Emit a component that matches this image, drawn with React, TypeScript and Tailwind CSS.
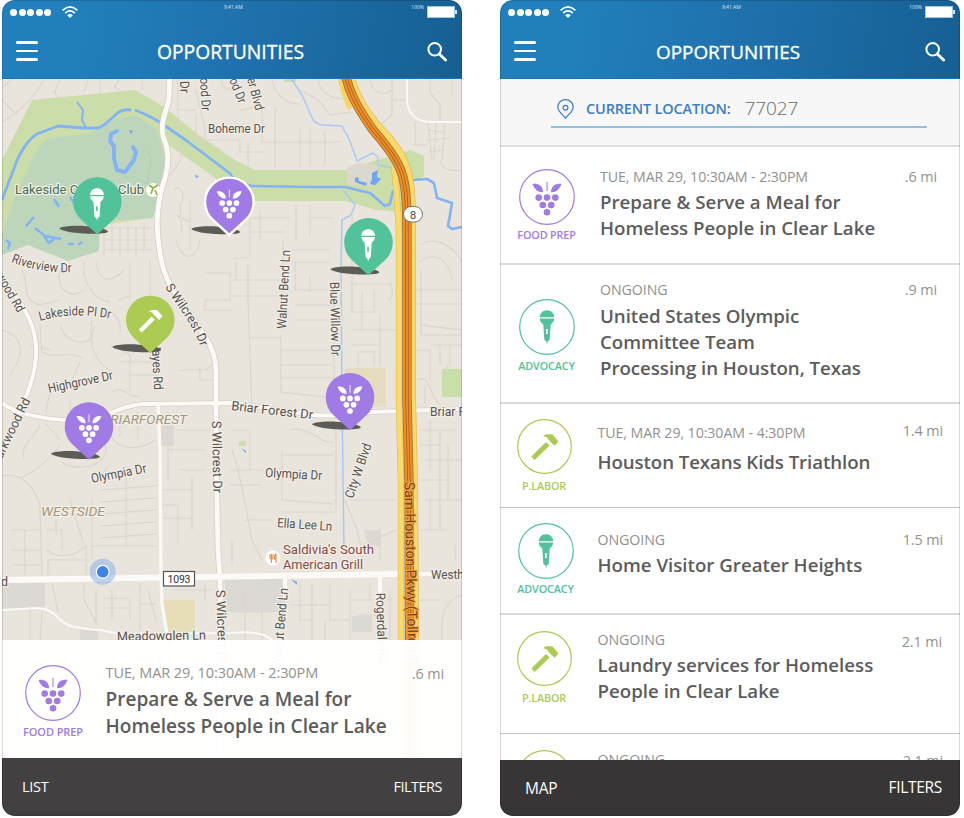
import React from "react";

type Kind = "food" | "mic" | "hammer";

const COLORS: Record<Kind, string> = { food: "#a07be5", mic: "#52c29b", hammer: "#abcb52" };

function Glyph({ kind, hole }: { kind: Kind; hole: string }) {
  if (kind === "food")
    return (
      <g>
        <path d="M-14.5 -13 C-10 -14 -4 -12 -4 -4.8 C-9 -4.5 -12 -7 -14.5 -13Z" />
        <path d="M14.5 -13 C10 -14 4 -12 4 -4.8 C9 -4.5 12 -7 14.5 -13Z" />
        <rect x="-0.5" y="-15" width="1" height="9" />
        <circle cx="-8.3" cy="0.6" r="3.3" />
        <circle cx="0" cy="0.6" r="3.3" />
        <circle cx="8.3" cy="0.6" r="3.3" />
        <circle cx="-4.2" cy="8" r="3.3" />
        <circle cx="4.2" cy="8" r="3.3" />
        <circle cx="0" cy="15.2" r="3.3" />
      </g>
    );
  if (kind === "mic")
    return (
      <g>
        <path d="M-7.2 -9.8 C-7.2 -14 -4 -16.8 0 -16.8 S7.2 -14 7.2 -9.8Z" />
        <path d="M-7.2 -8.4 H7.2 C7 -5.7 5.6 -3.8 3.7 -2.6 L2.7 12.8 L0.7 14.6 L0 17.4 L-0.7 14.6 L-2.7 12.8 L-3.7 -2.6 C-5.6 -3.8 -7 -5.7 -7.2 -8.4Z" />
        <rect x="-1" y="2" width="1.7" height="5" rx="0.6" fill={hole} />
      </g>
    );
  return (
    <g>
      <path d="M-13.4 10.3 L1.5 -4.7 L5.2 -0.9 L-10 13.8Z" />
      <path d="M-1.5 -10.4 L1.3 -12.4 H8 L14.2 -5 L10.2 -0.8 L4 -7 L2.4 -9.4Z" />
    </g>
  );
}

function Badge({ kind, size }: { kind: Kind; size: string }) {
  return (
    <svg className={size} viewBox="-28 -28 56 56" fill={COLORS[kind]}>
      <circle r="27.3" fill="#fff" stroke={COLORS[kind]} strokeWidth="1.2" />
      <Glyph kind={kind} hole="#fff" />
    </svg>
  );
}

function Pin({ x, y, kind, outlined }: { x: number; y: number; kind: Kind; outlined?: boolean }) {
  return (
    <g transform={`translate(${x} ${y})`}>
      <path d="M-38 27 C-34 23.6 -16 23.4 0 26 C10 28 13 30 9 31.200 C2 33.200 -32 32.500 -38 27Z" fill="#5c5b55" />
      <path
        d="M0 33 L-16.4 17.9 A24.3 24.3 0 1 1 16.4 17.9Z"
        fill={COLORS[kind]}
        stroke={outlined ? "#fff" : "none"}
        strokeWidth={outlined ? 2.4 : 0}
      />
      <g transform={kind === "mic" ? "translate(-0.3 2.8) scale(.95)" : "translate(0 .6) scale(.86)"} fill="#fff">
        <Glyph kind={kind} hole={COLORS[kind]} />
      </g>
    </g>
  );
}

const MINOR_STREETS = [
  // north-west corner
  "M2 88 L12 79 M2 122 C20 112 34 98 44 79 M14 112 L2 100 M60 79 C58 88 50 92 60 98 M88 79 L84 92 M100 79 V92 M120 79 C118 84 110 86 120 90 M142 79 V90",
  "M178 79 V150 M178 110 H196 M196 90 L205 128 H205 M196 115 V140 H240 V152 M205 128 V150 M221 79 C222 90 232 92 236 84 M240 110 L262 106 M262 106 V142 H300 V128 M275 106 V142 M248 142 V168 M275 142 V168 M300 142 V168",
  "M262 142 H340 M310 128 V165 M325 130 V165 M240 152 H262 M272 79 C275 95 285 104 300 104 M300 90 L318 100 L330 115 L350 112 M318 79 C320 95 335 100 345 98",
  // north-east corner
  "M370 79 C372 92 382 98 392 90 M392 79 V115 L376 128 M392 100 H407 M430 79 V92 L440 105 V122 M415 122 V145 H428 M428 122 L432 160 M436 122 L434 160 M445 122 L442 160 M428 130 L442 132 M427 140 L450 138 M428 152 L444 150 M452 79 V95 M440 160 C440 168 450 172 462 170",
  "M420 245 C430 238 450 240 462 262 M420 262 C432 252 448 256 452 280 M414 290 H462 M414 304 H462 M420 325 L462 330 M421 270 V335 M421 335 H462 M430 345 H462 M440 345 V365 M450 345 V365 M414 350 H430 V380 M418 380 C430 372 430 400 440 404",
  // golf course surrounds
  "M104 228 H152 M104 228 V256 M112 222 V250 M120 228 V256 M128 222 V250 M136 228 V256 M144 222 V250 M104 240 H152 M104 250 H152 M170 175 C178 165 184 158 180 150 M174 190 C182 182 186 200 180 205 L182 232 M176 215 L190 222 M190 200 V250 M176 240 C182 262 196 262 200 240",
  "M250 205 V258 H232 M260 212 V240 M250 218 H290 M250 232 H285 M283 240 V300 M283 250 H330 M296 205 V240 M310 205 V236 M310 218 H334 M283 262 H330 M350 225 H372 M352 215 V300",
  // centre grid
  "M248 265 V300 L252 410 M232 280 H282 M232 296 H282 M236 262 V280 M281 335 V392 M334 290 V390 M281 350 H334 M281 365 H334 M281 378 H334 M281 392 L334 398 M250 338 H281 M310 292 V276 M295 262 V290 M295 290 H334 M295 305 H334 M295 320 H334",
  "M350 284 H392 M352 284 V312 H374 V290 M362 292 V330 H380 V316 M352 330 H396 M352 345 H380 M380 330 V366 M358 366 V352 H374 V366 M388 284 C394 286 394 296 388 300",
  "M205 273 H230 V300 H205 M205 300 V310 H232 M180 370 H206 L212 365 M200 368 V380 H212 M195 340 L212 345",
  // west side
  "M22 270 C30 285 20 300 40 305 L60 300 M60 270 C56 290 70 300 84 290 M84 262 C82 280 92 300 110 302 M96 262 C100 285 112 282 124 270 M40 325 L42 352 C55 360 70 350 82 358 M30 345 L50 350 M60 325 C64 340 78 345 90 340 L92 320 M95 326 C86 345 96 362 112 372 M100 308 C112 310 122 318 120 332 M118 300 L130 296 M130 262 V300 M150 260 V296 M110 345 L130 355 V392 M120 362 H158 M130 375 H158 M112 392 C122 384 130 400 140 396 M50 392 L46 412 M70 400 V420 M80 362 L72 380 M2 330 C20 335 28 350 10 375",
  "M40 425 C34 440 20 442 24 460 M46 424 L60 440 M20 478 C40 470 52 456 60 445 M66 440 C90 430 108 440 106 452 C100 470 70 470 62 462 M2 476 C20 472 34 485 40 505 L42 580 M110 435 C120 452 140 450 156 440 M108 466 L98 480 M120 420 V436 M138 412 V440 M168 412 V450 H206 M175 430 H210 M168 430 V480 M180 470 H206 M192 476 V530 M163 490 H192 M163 505 H178 V545 M163 518 H192",
  "M10 530 H40 M10 550 H40 M25 530 V575 M12 565 H40 M46 530 H62 V550 M46 550 C60 560 78 556 86 545 V575 M56 520 V535 M70 500 L84 545 M92 500 V560 M100 490 L156 486 M100 502 L156 498 M100 514 L156 510 M100 526 L156 522 M100 538 L156 534 M126 478 V546 M92 546 H156 M48 575 V560 H86",
  "M84 583 V600 L96 622 M96 590 V625 M104 598 H130 V620 M104 608 H130 M112 590 V620 M140 583 V630 M148 590 L156 620 M44 600 V583 M52 583 L58 612 M30 610 V640 M42 612 L40 640 M140 604 H156 M172 590 H212 M205 583 V600",
  // south centre
  "M232 450 C240 470 244 500 252 540 L262 560 M230 470 H282 M230 485 H262 M282 450 V500 M282 455 H334 M282 500 L334 504 M282 512 H336 M300 540 V570 M336 430 V510 M290 430 C310 425 320 445 334 442 M232 430 H250 V470 M345 500 C352 520 360 528 362 560 M350 500 H396 M362 545 L396 530 M380 528 V560 M232 540 V566 M244 520 H270",
  "M232 612 H270 M245 590 V640 M262 612 V640 M300 583 V620 M312 583 V640 M290 605 H330 M330 583 V620 H350 M350 590 V640 M350 600 H392 M370 583 V600 M390 590 V640 M300 620 H312 M325 620 V640 M356 615 H380",
  "M430 420 V470 M420 430 H455 M440 430 V530 M420 445 H440 M425 460 H462 M448 445 V500 M420 480 H448 M425 500 H462 M430 500 V530 M420 530 H445 M455 545 V560 M462 595 C445 600 440 615 442 640 M420 600 H440 M425 385 V404 M447 372 V366",
].join(" ");

function MapLabel(props: { x: number; y: number; rotate?: number; width: number; size?: number; fill?: string; children: string }) {
  const { x, y, rotate = 0, width, size = 13, fill = "#55524e" } = props;
  return (
    <text
      transform={`translate(${x} ${y}) rotate(${rotate})`}
      textLength={width}
      lengthAdjust="spacingAndGlyphs"
      fontSize={size}
      fill={fill}
      stroke="#f3efe9"
      strokeWidth="2.5"
      strokeLinejoin="round"
      paintOrder="stroke"
    >
      {props.children}
    </text>
  );
}

function CurvedLabel({ id, d, width, size = 13, children }: { id: string; d: string; width: number; size?: number; children: string }) {
  return (
    <g>
      <path id={id} d={d} fill="none" />
      <text fontSize={size} fill="#55524e" stroke="#f3efe9" strokeWidth="2.5" strokeLinejoin="round" paintOrder="stroke">
        <textPath href={`#${id}`} textLength={width} lengthAdjust="spacingAndGlyphs">
          {children}
        </textPath>
      </text>
    </g>
  );
}

const HIGHWAY = "M345 72 C348 90 356 106 373 130 C390 150 401 164 404 182 C407 196 407 210 407 268 V400 L409 483 L410 760";
const HIGHWAY_EAST = "M350 72 C353 90 361 106 377 125 C398 146 406 160 410 182 C412 196 412 210 412 268 V400 L414 483 L416 760";
const WILCREST = "M170 72 L169 98 C167 112 160 120 163 136 C168 148 170 160 165 178 C158 200 155 220 159 246 C162 272 168 285 187 310 C202 334 216 345 216 372 V450 L218 550 L220 577 V760";
const BRIAR_FOREST = "M2 403 C16 414 50 422 90 420 C110 416 118 406 142 404 L233 403 L313 415 Q340 417 373 412 L462 409";
const KIRKWOOD = "M2 280 C18 296 34 320 36 345 C38 372 26 400 8 436 L2 450";

function CityMap() {
  return (
    <svg className="block h-[679px] w-[460px] font-['Roboto',sans-serif]" viewBox="2 79 460 679">
      <rect x="2" y="79" width="460" height="679" fill="#e9e4dc" />
      <path d="M2 160 L32 100 L135 90 L163 106 L200 136 L235 160 L255 170 H347 L377 160 L403 153 L410 150 L424 156 V176 L414 182 L402 212 L377 210 L345 201 H250 L232 190 L166 143 L164 180 L150 218 L2 240Z" fill="#cbdea9" />
      <path d="M48 138 L90 134 L117 118 L137 116 L157 130 L165 161 L163 181 L153 218 L100 221 L99 251 L68 261 L28 245 L2 255 V235 L14 200 L27 171 L37 150Z" fill="#bcd5bb" />
      <path d="M347 168 L358 163 L377 165 L378 178 L370 186 L347 184Z" fill="#dbd8d0" />
      <path d="M345 368 H386 V407 H345Z" fill="#e6dcbf" />
      <path d="M442 369 H462 V397 H442Z" fill="#c8dfaa" />
      <path d="M163 600 H195 V632 H166Z" fill="#e7ddb8" />
      <path d="M239 441 H246 V446 H239Z" fill="#c8dfaa" />
      <path d="M284 79 H296 V82 H284Z" fill="#c8dfaa" />
      <path d="M2 583 H45 V606 L36 610 H2Z M225 579 H285 V612 H225Z M352 616 H372 V632 H352Z M364 530 H380 V546 H368Z M161 424 H174 V446 H161Z M80 628 H98 V640 H80Z" fill="#dcd9d4" />
      <path d={MINOR_STREETS} fill="none" stroke="#dad4cb" strokeWidth="1.1" />
      <path d="M148 150 C155 165 145 180 148 190" fill="none" stroke="#b0cab0" strokeWidth="0.8" />

      <g fill="none" stroke="#83b3f6" strokeLinejoin="round">
        <path strokeWidth="2.8" d="M2 200 L18 158 C24 146 30 138 37 134 L58 126 L83 128 H98 C106 126 114 115 119 112 Q124 109 131 110 M135 110 Q146 114 158 121 L187 141 L232 175" />
        <path strokeWidth="2.6" d="M230 175 Q240 184 252 186 L310 187 H345 L370 193 L385 206 L390 204 L393 190 M412 180 L427 179 L434 183 L437 198 L452 203 L448 226 L452 229 L462 227" />
        <path strokeWidth="2" d="M77 102 L83 110 L82 120 L86 128" />
        <path strokeWidth="1.5" stroke="#a8c9f4" d="M292 80 L302 95 L313 120 Q317 124 323 125 L342 126 L350 141 L357 161 L373 153 L378 157 L378 165 L392 168 M343 190 L355 205 L351 215 L342 220 L341 268 L342 400 L344 552" />
        <path strokeWidth="4" strokeLinecap="round" d="M117 131 L111 134 L110 141 L114 146 V158 L117 170 L125 172 L134 160 L136 152 L133 147" />
        <path strokeWidth="2.4" d="M54 199 L59 207 M34 217 L26 226 M35 228 L45 236 L61 239 M44 236 L49 243 L54 239 M68 244 H74 M78 245 L82 242 M6 240 L10 243 L8 249 M70 197 L74 203" />
      </g>
      <path d="M372 173 L378 170 L377 177 L381 179 L375 185 L370 184 L372 179Z M355 178 L358 177 L359 181 L367 183 L366 186 L355 182Z M129 130 l4 1 -2 3Z M195 175 l4 1 -3 2Z M241 448 l5 3 v2Z M291 579 l6 3 0 3Z" fill="#6fa5f3" />

      <g fill="none" stroke="#d5cfc6" strokeLinejoin="round">
        <path strokeWidth="6.4" d={WILCREST} />
        <path strokeWidth="5.4" d={BRIAR_FOREST} />
        <path strokeWidth="5.4" d={KIRKWOOD} />
      </g>
      <g fill="none" stroke="#fbfaf7" strokeLinejoin="round">
        <path strokeWidth="4.8" d={WILCREST} />
        <path strokeWidth="4" d={BRIAR_FOREST} />
        <path strokeWidth="4" d={KIRKWOOD} />
        <path strokeWidth="3.2" d="M158 404 L160 450 L161 577 L162 604 L168 640" />
        <path strokeWidth="2" d="M407 79 V101 Q409 121 430 122 H462 M2 610 L38 608 C54 609 56 618 66 624 Q76 629 100 630 L120 634 L230 633 Q262 630 272 640" />
        <path strokeWidth="6" d="M2 580 L200 577 L397 574" />
        <path strokeWidth="4" d="M285 577 V600 M380 575 V600 M392 574 H462" />
      </g>

      <g fill="none">
        <path d="M339 72 C342 90 346 100 350 109" stroke="#f6d566" strokeWidth="5" />
        <path d={HIGHWAY_EAST} stroke="#e0bb58" strokeWidth="8" />
        <path d={HIGHWAY_EAST} stroke="#fbda6c" strokeWidth="6.6" />
        <path d="M394 166 C396 180 397 196 399 230 V400 L401 483 L401 760" stroke="#e0bb58" strokeWidth="6.4" />
        <path d="M394 166 C396 180 397 196 399 230 V400 L401 483 L401 760" stroke="#fbda6c" strokeWidth="5.2" />
        <path d={HIGHWAY} stroke="#94702f" strokeWidth="9.4" />
        <path d={HIGHWAY} stroke="#ef8f28" strokeWidth="7.8" />
        <path d={HIGHWAY} stroke="#a85d18" strokeWidth="3.4" />
        <path d={HIGHWAY} stroke="#ef8f28" strokeWidth="1.8" />
      </g>

      <MapLabel x={180} y={81} rotate={88} width={12}>Dr</MapLabel>
      <MapLabel x={200} y={78} rotate={87} width={33}>ood Dr</MapLabel>
      <MapLabel x={229} y={80} rotate={68} width={26}>od Dr</MapLabel>
      <MapLabel x={247} y={79} rotate={75} width={33}>er Blvd</MapLabel>
      <MapLabel x={208} y={133} width={57}>Boheme Dr</MapLabel>
      <MapLabel x={15} y={194} width={129} size={13.5} fill="#46704c">Lakeside Country Club</MapLabel>
      <circle cx="153" cy="190" r="7" fill="#fff" />
      <path d="M149 185 L153 188 L158 185 M153 188 L151 194 M155 190 L157 195" stroke="#83b740" strokeWidth="1.6" fill="none" />
      <CurvedLabel id="riverview" d="M11 262 Q42 274 76 272" width={62}>Riverview Dr</CurvedLabel>
      <MapLabel x={-4} y={276} rotate={60} width={43}>wood Rd</MapLabel>
      <CurvedLabel id="lakeside-place" d="M40 321 Q74 311 112 319" width={71}>Lakeside Pl Dr</CurvedLabel>
      <MapLabel x={151.5} y={342} rotate={87} width={48}>Hayes Rd</MapLabel>
      <CurvedLabel id="wilcrest-north" d="M165 287 C176 306 190 318 201 348" width={70}>S Wilcrest Dr</CurvedLabel>
      <MapLabel x={49} y={393} rotate={-12} width={66}>Highgrove Dr</MapLabel>
      <MapLabel x={2} y={459} rotate={-64} width={65}>arkwood Rd</MapLabel>
      <g fontStyle="italic">
        <MapLabel x={102} y={424} width={85} size={13.5} fill="#a1967a">BRIARFOREST</MapLabel>
        <MapLabel x={41} y={516} width={64} size={13.5} fill="#a1967a">WESTSIDE</MapLabel>
      </g>
      <MapLabel x={231} y={410} rotate={6.5} width={82}>Briar Forest Dr</MapLabel>
      <MapLabel x={430} y={416} width={42}>Briar Fo</MapLabel>
      <MapLabel x={212} y={421} rotate={89} width={72}>S Wilcrest Dr</MapLabel>
      <MapLabel x={286} y={329} rotate={-87} width={79}>Walnut Bend Ln</MapLabel>
      <MapLabel x={330} y={282} rotate={89} width={74}>Blue Willow Dr</MapLabel>
      <MapLabel x={353} y={499} rotate={-71} width={57}>City W Blvd</MapLabel>
      <MapLabel x={92} y={483} rotate={-11} width={56}>Olympia Dr</MapLabel>
      <MapLabel x={265} y={477} rotate={3} width={57}>Olympia Dr</MapLabel>
      <MapLabel x={277} y={527} rotate={4} width={55}>Ella Lee Ln</MapLabel>
      <circle cx="273" cy="558" r="7.5" fill="#fff" />
      <path d="M270 554 V558 Q271.5 560 273 558 V554 M271.5 554 V563 M276 563 V554 Q274.5 555 274.5 559 H276" stroke="#f08a32" strokeWidth="1.1" fill="none" />
      <MapLabel x={283} y={554} width={91} size={13.5} fill="#854a45">Saldivia's South</MapLabel>
      <MapLabel x={283} y={569} width={80} size={13.5} fill="#854a45">American Grill</MapLabel>
      <MapLabel x={1} y={586} width={7}>d</MapLabel>
      <MapLabel x={431} y={579} width={39}>Westhe</MapLabel>
      <MapLabel x={216} y={590} rotate={88} width={74}>S Wilcrest Dr</MapLabel>
      <MapLabel x={117} y={641} rotate={-1} width={89}>Meadowglen Ln</MapLabel>
      <MapLabel x={281} y={668} rotate={-85} width={80}>Walnut Bend Ln</MapLabel>
      <MapLabel x={376} y={593} rotate={88} width={70}>Rogerdale Rd</MapLabel>
      <text transform="translate(404.5 482) rotate(88.8)" textLength="184" lengthAdjust="spacingAndGlyphs" fontSize="14" fill="#754518" stroke="#f3a443" strokeWidth="2" paintOrder="stroke">
        Sam Houston Pkwy (Tollroad)
      </text>

      <rect x="403.5" y="206.5" width="19" height="15.5" rx="7.7" fill="#fff" stroke="#77736b" />
      <text x="413" y="218.5" textAnchor="middle" fontSize="11" fill="#444">8</text>
      <rect x="163.5" y="571.5" width="31" height="14.5" fill="#fff" stroke="#55534f" strokeWidth="1.2" />
      <text x="179" y="583" textAnchor="middle" fontSize="10.5" fill="#333" textLength="23">1093</text>

      <circle cx="102.7" cy="571.8" r="13" fill="#8db1ea" fillOpacity=".55" />
      <circle cx="102.7" cy="571.8" r="7" fill="#fff" />
      <circle cx="102.7" cy="571.8" r="5.8" fill="#3f82ea" />

      <Pin x={97.3} y={201.5} kind="mic" />
      <Pin x={229.3} y={202} kind="food" outlined />
      <Pin x={368.5} y={242.3} kind="mic" />
      <Pin x={150.3} y={320} kind="hammer" />
      <Pin x={350} y={397.3} kind="food" />
      <Pin x={89} y={426.7} kind="food" />
    </svg>
  );
}

function Header({ title }: { title: string }) {
  return (
    <header className="flex h-[79px] shrink-0 flex-col border-b border-[#1b74b5] bg-linear-[100deg] from-[#2180bb] from-15% via-[#1f72ae] via-50% to-[#165f92] text-white">
      <div className="flex h-6 items-start pt-[5px] pr-[5px] pl-2">
        <div className="flex gap-[1.6px] pt-[3.5px]">
          {[0, 1, 2, 3, 4].map((i) => (
            <span key={i} className="size-[7px] rounded-full bg-white" />
          ))}
        </div>
        <svg className="mt-px ml-[10.5px] h-3 w-4" viewBox="0 0 16 12" fill="none" stroke="#fff" strokeWidth="1.6">
          <path d="M0.6 4.3 Q8 -2.4 15.4 4.3 M3.2 7.1 Q8 2.8 12.8 7.1" />
          <path d="M5.2 9.3 Q8 6.8 10.8 9.3 L8 12Z" fill="#fff" stroke="none" />
        </svg>
        <span className="ml-[146px] w-5 text-[5px] leading-[5px] whitespace-nowrap text-white/80">9:41 AM</span>
        <span className="ml-auto text-[5px] leading-[5px] text-white/80">100%</span>
        <div className="ml-[3px] flex items-center pt-px">
          <span className="h-3 w-7 border border-[#9fc6e2] bg-white" />
          <span className="h-1 w-0.5 bg-[#cfe3f1]" />
        </div>
      </div>
      <div className="flex flex-1 items-center justify-between pr-[15px] pl-3.5">
        <div className="flex w-[22px] flex-col gap-1.5">
          <span className="h-[2.7px] rounded-full bg-white" />
          <span className="h-[2.7px] rounded-full bg-white" />
          <span className="h-[2.7px] rounded-full bg-white" />
        </div>
        <h1 className={`pt-0.5 [-webkit-text-stroke:0.35px_white] ${title}`}>OPPORTUNITIES</h1>
        <svg className="mt-px size-5" viewBox="0 0 20 20" fill="none" stroke="#fff">
          <circle cx="7.7" cy="7.3" r="6.3" strokeWidth="2" />
          <path d="M12.3 12 L18.6 18" strokeWidth="2.8" strokeLinecap="round" />
        </svg>
      </div>
    </header>
  );
}

interface Item {
  kind: Kind;
  label: string;
  meta: string;
  lines: string[];
  distance: string;
  row: string;
  iconCol: string;
  icon: string;
  labelGap: string;
  body: string;
  titleGap: string;
  dist: string;
}

const ITEMS: Item[] = [
  {
    kind: "food", label: "FOOD PREP", meta: "TUE, MAR 29, 10:30AM - 2:30PM",
    lines: ["Prepare & Serve a Meal for", "Homeless People in Clear Lake"], distance: ".6 mi",
    row: "h-[118px] border-b-2 border-[#dedede]", iconCol: "w-[93px] pt-[22px]", icon: "size-14", labelGap: "mt-[3px]",
    body: "ml-[7px] pt-5", titleGap: "mt-0.5", dist: "pr-[23px] pt-5",
  },
  {
    kind: "mic", label: "ADVOCACY", meta: "ONGOING",
    lines: ["United States Olympic", "Committee Team", "Processing in Houston, Texas"], distance: ".9 mi",
    row: "h-[139px] border-b-2 border-[#dadada]", iconCol: "w-[93px] pt-[34px]", icon: "size-14", labelGap: "mt-1",
    body: "ml-[7px] pt-[15px]", titleGap: "mt-[3px] tracking-[-0.04px]", dist: "pr-[23px] pt-[15px]",
  },
  {
    kind: "hammer", label: "P.LABOR", meta: "TUE, MAR 29, 10:30AM - 4:30PM",
    lines: ["Houston Texans Kids Triathlon"], distance: "1.4 mi",
    row: "h-[104px] border-b border-[#c6c6c6]", iconCol: "w-[88px] pt-[15px]", icon: "size-[55px]", labelGap: "mt-[5px]",
    body: "ml-[9.5px] pt-[19px]", titleGap: "mt-[6px] tracking-[-0.09px]", dist: "pr-[17px] pt-[17px]",
  },
  {
    kind: "mic", label: "ADVOCACY", meta: "ONGOING",
    lines: ["Home Visitor Greater Heights"], distance: "1.5 mi",
    row: "h-[107px] border-b-2 border-[#dadada]", iconCol: "w-[91px] pt-[15px]", icon: "size-14", labelGap: "mt-[3px]",
    body: "ml-[6.5px] pt-[22px]", titleGap: "mt-0.5", dist: "pr-[17px] pt-[22px]",
  },
  {
    kind: "hammer", label: "P.LABOR", meta: "ONGOING",
    lines: ["Laundry services for Homeless", "People in Clear Lake"], distance: "2.1 mi",
    row: "h-[119px] border-b border-[#c6c6c6]", iconCol: "w-[88px] pt-4", icon: "size-[55px]", labelGap: "mt-[5px]",
    body: "ml-[9.5px] pt-[15px]", titleGap: "mt-0.5", dist: "pr-[18px] pt-[17px]",
  },
  {
    kind: "hammer", label: "P.LABOR", meta: "ONGOING",
    lines: ["Laundry services for Homeless", "People in Clear Lake"], distance: "2.1 mi",
    row: "h-[119px]", iconCol: "w-[88px] pt-4", icon: "size-[55px]", labelGap: "mt-[5px]",
    body: "ml-[9.5px] pt-4", titleGap: "mt-0.5", dist: "pr-[17px] pt-[17px]",
  },
];

function Row({ item, meta, title, label }: { item: Item; meta: string; title: string; label: string }) {
  const tint: Record<Kind, string> = { food: "text-[#a07be5]", mic: "text-[#52c29b]", hammer: "text-[#abcb52]" };
  return (
    <div className={`flex shrink-0 items-start overflow-hidden ${item.row}`}>
      <div className={`flex shrink-0 flex-col items-center ${item.iconCol}`}>
        <Badge kind={item.kind} size={item.icon} />
        <span className={`font-semibold whitespace-nowrap ${label} ${item.labelGap} ${tint[item.kind]}`}>{item.label}</span>
      </div>
      <div className={`min-w-0 flex-1 whitespace-nowrap ${item.body}`}>
        <div className={`text-[#919191] ${meta}`}>{item.meta}</div>
        <div className={`font-semibold text-[#5c5c5c] ${title} ${item.titleGap}`}>
          {item.lines.map((line) => (
            <div key={line}>{line}</div>
          ))}
        </div>
      </div>
      <div className={`shrink-0 text-[14.4px] leading-5 tracking-[-0.1px] text-[#919191] ${item.dist}`}>{item.distance}</div>
    </div>
  );
}

const CARD: Item = {
  ...ITEMS[0],
  row: "h-[118px]",
  iconCol: "w-[102px] pt-[25px]",
  labelGap: "mt-1",
  body: "ml-[1.5px] pt-[23px]",
  titleGap: "mt-[3px] tracking-[0.05px]",
  dist: "pr-[18px] pt-6",
};

function Phone({ children }: { children: React.ReactNode }) {
  return (
    <div className="relative flex h-[816px] w-[460px] shrink-0 flex-col overflow-hidden rounded-[13px] bg-white">
      {children}
      <div className="pointer-events-none absolute inset-0 rounded-[13px] border-[1.5px] border-black/15" />
    </div>
  );
}

export default function App() {
  return (
    <div className="flex h-[818px] w-[964px] gap-[38px] overflow-hidden bg-white pl-0.5 font-['Open_Sans',sans-serif]">
      <Phone>
        <Header title="mr-1 text-[19.3px]" />
        <main className="relative h-[679px] shrink-0">
          <CityMap />
          <div className="absolute inset-x-0 bottom-0 bg-white/97">
            <Row item={CARD} meta="text-[14.5px] leading-5 tracking-[-0.08px]" title="text-[19px] leading-[26.5px]" label="text-[11px] leading-[14px] tracking-[-0.1px]" />
          </div>
        </main>
        <footer className="flex flex-1 items-center justify-between bg-[#434041] px-5 text-[14.5px] text-white">
          <span className="tracking-[-0.3px]">LIST</span>
          <span className="tracking-[-0.5px]">FILTERS</span>
        </footer>
      </Phone>
      <Phone>
        <Header title="mr-[5px] text-[18.9px]" />
        <div className="flex h-[68px] shrink-0 justify-center border-b-2 border-[#dedede] bg-[#f7f7f7]">
          <div className="mr-[-18px] flex h-[49px] w-[376px] items-center border-b-2 border-[#96c1de] pt-3 pl-[6px]">
            <svg className="h-5 w-[17px]" viewBox="0 0 17 20" fill="none" stroke="#3c7cc9" strokeWidth="1.2">
              <path d="M8.5 19.3 C6.5 16 0.8 13 0.8 8 A7.7 7.4 0 0 1 16.2 8 C16.2 13 10.5 16 8.5 19.3Z" />
              <circle cx="8.5" cy="8.7" r="2.4" />
            </svg>
            <span className="ml-3 text-[14.5px] font-semibold tracking-[-0.16px] text-[#3c7cc9]">CURRENT LOCATION:</span>
            <span className="ml-3.5 text-[19px] font-light tracking-[-0.1px] text-[#6b6b6b]">77027</span>
          </div>
        </div>
        <main className="flex h-[613px] shrink-0 flex-col overflow-hidden">
          {ITEMS.map((item, i) => (
            <Row key={i} item={item} meta="text-[14.2px] leading-5 tracking-[-0.08px]" title="text-[18.7px] leading-[26px]" label="text-[10.8px] leading-[14px] tracking-[-0.15px]" />
          ))}
        </main>
        <footer className="flex flex-1 items-center justify-between bg-[#383536] pr-[18px] pl-[25px] text-[15.5px] text-white">
          <span className="pt-px tracking-[-0.2px]">MAP</span>
          <span className="tracking-[-0.3px]">FILTERS</span>
        </footer>
      </Phone>
    </div>
  );
}
